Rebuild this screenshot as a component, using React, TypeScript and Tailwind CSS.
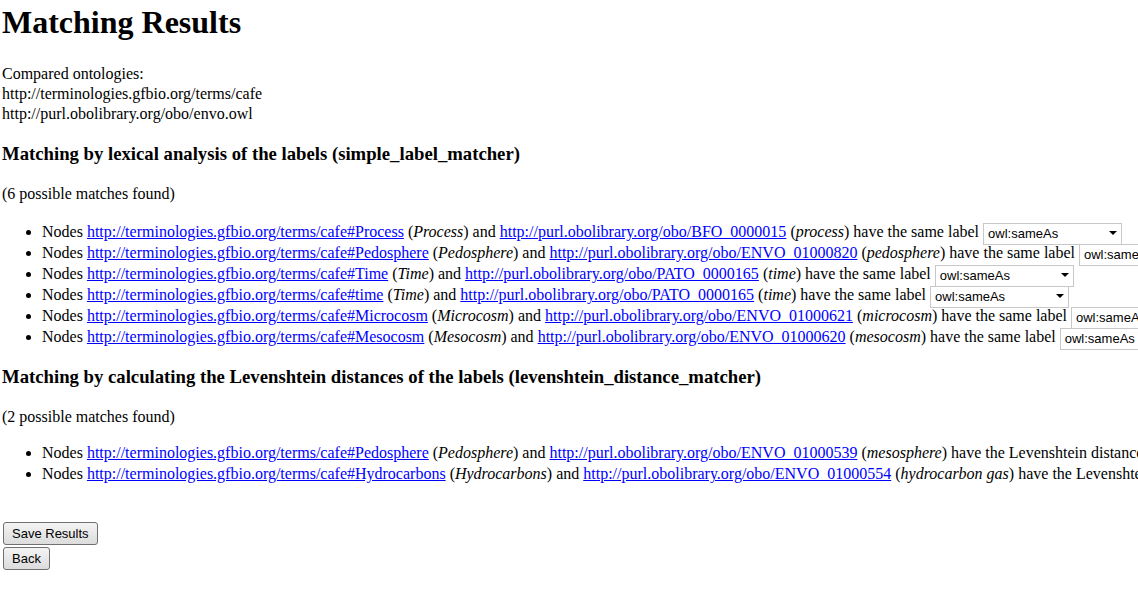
const BASE_A = "http://terminologies.gfbio.org/terms/cafe#";
const BASE_B = "http://purl.obolibrary.org/obo/";

type Match = {
  a: string;
  aLabel: string;
  b: string;
  bLabel: string;
};

const lexical: Match[] = [
  { a: "Process", aLabel: "Process", b: "BFO_0000015", bLabel: "process" },
  { a: "Pedosphere", aLabel: "Pedosphere", b: "ENVO_01000820", bLabel: "pedosphere" },
  { a: "Time", aLabel: "Time", b: "PATO_0000165", bLabel: "time" },
  { a: "time", aLabel: "Time", b: "PATO_0000165", bLabel: "time" },
  { a: "Microcosm", aLabel: "Microcosm", b: "ENVO_01000621", bLabel: "microcosm" },
  { a: "Mesocosm", aLabel: "Mesocosm", b: "ENVO_01000620", bLabel: "mesocosm" },
];

const levenshtein: Match[] = [
  { a: "Pedosphere", aLabel: "Pedosphere", b: "ENVO_01000539", bLabel: "mesosphere" },
  { a: "Hydrocarbons", aLabel: "Hydrocarbons", b: "ENVO_01000554", bLabel: "hydrocarbon gas" },
];

function RelationSelect() {
  return (
    <span className="relative inline-block align-middle ml-[4px] w-[139px] h-[22px]">
      <select
        defaultValue="owl:sameAs"
        className="appearance-none w-full h-full border border-[#c8c8c8] bg-white pl-[4px] pr-[20px] text-[13px] leading-[20px] text-black font-['Liberation_Sans',Arial,sans-serif] outline-none"
      >
        <option>owl:sameAs</option>
        <option>owl:equivalentClass</option>
        <option>skos:exactMatch</option>
        <option>skos:closeMatch</option>
      </select>
      <span className="pointer-events-none absolute right-[5px] top-[9px] w-0 h-0 border-l-[4px] border-r-[4px] border-t-[4px] border-l-transparent border-r-transparent border-t-black" />
    </span>
  );
}

function NodeLink({ href }: { href: string }) {
  return (
    <a href={href} className="text-[#0000ff] underline">
      {href}
    </a>
  );
}

function Section({
  title,
  matches,
  suffix,
  listGap,
}: {
  title: string;
  matches: Match[];
  suffix: string;
  listGap: string;
}) {
  return (
    <>
      <h3 className="text-[18.72px] font-bold leading-[22px] mt-[19px] mb-[19px]">{title}</h3>
      <p className="leading-[20px]">({matches.length} possible matches found)</p>
      <ul className={`list-disc pl-[40px] mb-[18px] ${listGap}`}>
        {matches.map((m, i) => (
          <li key={i} className="leading-[21px] h-[21px]">
            Nodes <NodeLink href={BASE_A + m.a} /> (<i>{m.aLabel}</i>) and{" "}
            <NodeLink href={BASE_B + m.b} /> (<i>{m.bLabel}</i>) {suffix}
            <RelationSelect />
          </li>
        ))}
      </ul>
    </>
  );
}

export default function App() {
  return (
    <div className="w-[1138px] h-[589px] overflow-hidden bg-white text-black pl-[2px] whitespace-nowrap font-['Liberation_Serif','Times_New_Roman',serif] text-[16px]">
      <h1 className="text-[32px] font-bold leading-[37px] mt-[4px] mb-[23px]">Matching Results</h1>
      <div className="leading-[20px]">
        Compared ontologies:
        <br />
        http://terminologies.gfbio.org/terms/cafe
        <br />
        http://purl.obolibrary.org/obo/envo.owl
      </div>

      <Section
        title="Matching by lexical analysis of the labels (simple_label_matcher)"
        matches={lexical}
        suffix="have the same label"
        listGap="mt-[17px]"
      />
      <Section
        title="Matching by calculating the Levenshtein distances of the labels (levenshtein_distance_matcher)"
        matches={levenshtein}
        suffix="have the Levenshtein distance below the threshold"
        listGap="mt-[15px]"
      />

      <div className="mt-[38px] flex flex-col items-start gap-[2px] pl-[1px] font-['Liberation_Sans',Tahoma,sans-serif] text-[13px]">
        <button className="h-[23px] px-[8px] border border-[#707070] rounded-[3px] bg-gradient-to-b from-[#f4f4f4] to-[#dcdcdc] text-black leading-[20px]">
          Save Results
        </button>
        <button className="h-[23px] px-[8px] border border-[#707070] rounded-[3px] bg-gradient-to-b from-[#f4f4f4] to-[#dcdcdc] text-black leading-[20px]">
          Back
        </button>
      </div>
    </div>
  );
}
